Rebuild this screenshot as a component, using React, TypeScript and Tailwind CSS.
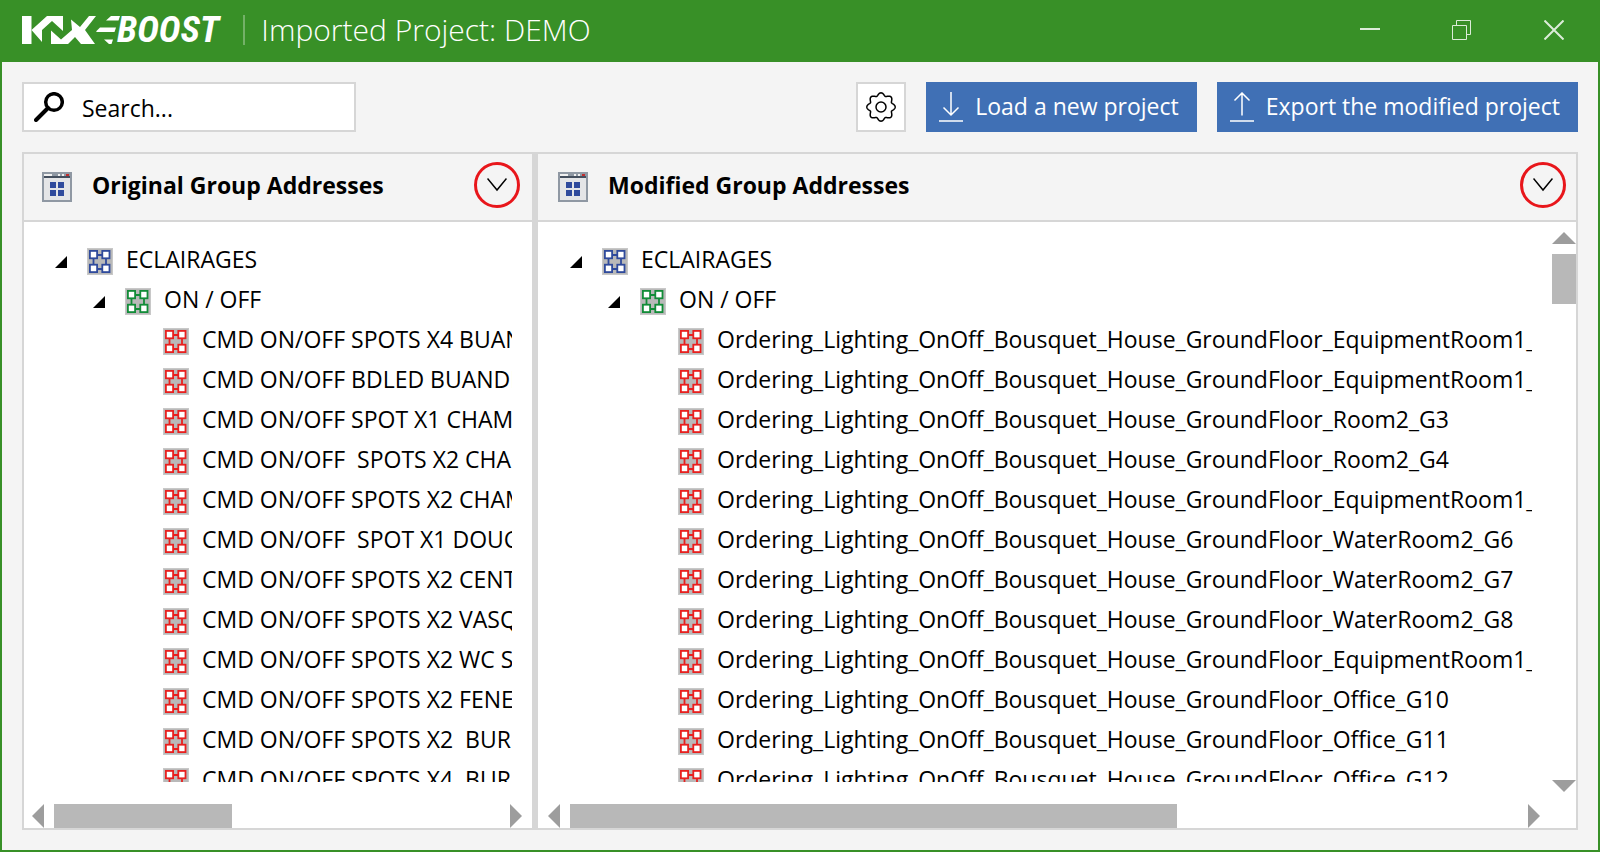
import React from "react";

const ui = "font-['Open_Sans','Noto_Sans',sans-serif]";

function Logo() {
  return (
    <div className="flex items-center text-white" role="img" aria-label="KNX eBoost">
      <svg width="95" height="28" viewBox="0 0 95 28" fill="currentColor" className="overflow-visible" aria-hidden="true">
        <path d="M0 0H9.500V28H0Z" />
        <path d="M9.500 14L25 0H41V15L30 5L20 14L20 26Z" />
        <path d="M29 14.500L39 23.500L50 14L49 3.500L58 11L67 0H74L63 14L73 28H59L53 21L46 28H29Z" />
        <path d="M84 4.500L89 0H98L96.500 4.500ZM74 15.500L78 11.500H94L92.500 16H75ZM82 23.500H91L89.500 28H87Z" />
      </svg>
      <span className="font-['Roboto_Condensed','Roboto',sans-serif] text-[37px] leading-8 font-bold italic">
        BOOST
      </span>
    </div>
  );
}

function AddressIcon({ className }: { className: string }) {
  return (
    <svg width="26" height="27" viewBox="0 0 26 27" className={`shrink-0 ${className}`} aria-hidden="true">
      <rect width="26" height="27" fill="#c8c8c8" />
      <rect x="1" y="1" width="24" height="25" fill="#b9b9b9" />
      <path d="M10 7H16M10 21H16M6.500 10V18M19 10V18" stroke="currentColor" strokeWidth="1.800" />
      <g fill="#fff" stroke="currentColor" strokeWidth="1.800">
        <rect x="2.900" y="2.900" width="7.200" height="7.400" />
        <rect x="15.300" y="2.900" width="7.200" height="7.400" />
        <rect x="2.900" y="16.700" width="7.200" height="7.400" />
        <rect x="15.300" y="16.700" width="7.200" height="7.400" />
      </g>
    </svg>
  );
}

function WindowIcon() {
  return (
    <svg width="30" height="30" viewBox="0 0 30 30" className="shrink-0" aria-hidden="true">
      <rect width="30" height="30" fill="#8f98a3" />
      <rect x="2" y="4" width="26" height="24" fill="#e4e5e7" />
      <path d="M2 2H10V4H2ZM16 2H18V4H16ZM20 2H22V4H20Z" fill="#f1f1f1" />
      <path d="M24 2H27V4H24Z" fill="#c22d2d" />
      <path d="M2 4H28V6H2Z" fill="#444f5e" />
      <path d="M8 10H14V16H8ZM16 10H22V16H16ZM8 18H14V24H8ZM16 18H22V24H16Z" fill="#2f4a9c" />
    </svg>
  );
}

const gearPath =
  Array.from({ length: 128 }, (_, i) => {
    const a = (i / 128) * Math.PI * 2;
    const r = 11.300 + 2.900 * Math.pow((1 + Math.cos(8 * a)) / 2, 0.800);
    return `${i ? "L" : "M"}${(15 + r * Math.sin(a)).toFixed(2)} ${(15 - r * Math.cos(a)).toFixed(2)}`;
  }).join("") + "Z";

function Gear() {
  return (
    <svg width="30" height="30" viewBox="0 0 30 30" fill="none" stroke="#000" strokeWidth="1.500" strokeLinejoin="round" aria-hidden="true">
      <path d={gearPath} />
      <circle cx="15" cy="15" r="5" />
    </svg>
  );
}

function TransferIcon({ up }: { up?: boolean }) {
  return (
    <svg width="24" height="30" viewBox="0 0 24 30" fill="none" stroke="#fff" strokeWidth="1.500" aria-hidden="true">
      {up ? <path d="M12 23.500V1M4.500 8.500L12 1L19.500 8.500" /> : <path d="M12 0V23M4.500 15.500L12 23L19.500 15.500" />}
      <path d="M0 29H24" />
    </svg>
  );
}

type Dir = "up" | "down" | "left" | "right";

const arrows: Record<Dir, [number, number, string]> = {
  up: [24, 12, "M0 12L12 0L24 12Z"],
  down: [24, 12, "M0 0L12 12L24 0Z"],
  left: [12, 24, "M12 0L0 12L12 24Z"],
  right: [12, 24, "M0 0L12 12L0 24Z"],
};

function ScrollArrow({ dir }: { dir: Dir }) {
  const [w, h, d] = arrows[dir];
  return (
    <button type="button" aria-label={`Scroll ${dir}`} className="block shrink-0">
      <svg width={w} height={h} viewBox={`0 0 ${w} ${h}`} fill="#9d9d9d" className="block">
        <path d={d} />
      </svg>
    </button>
  );
}

function HScroll({ className, thumb }: { className: string; thumb: string }) {
  return (
    <div className={`flex h-6 shrink-0 items-center gap-2.5 ${className}`}>
      <ScrollArrow dir="left" />
      <div className="h-6 flex-1">
        <div className={`h-6 bg-[#b8b8b8] ${thumb}`} />
      </div>
      <ScrollArrow dir="right" />
    </div>
  );
}

function Row({ level, color, open, children }: { level: string; color: string; open?: boolean; children: string }) {
  return (
    <li className={`flex h-10 items-center whitespace-pre ${level}`}>
      <span className="w-8 shrink-0">
        {open && (
          <svg width="12" height="12" viewBox="0 0 12 12" className="mt-0.5 block" aria-hidden="true">
            <path d="M12 0V12H0Z" />
          </svg>
        )}
      </span>
      <AddressIcon className={color} />
      <span className="pb-1 pl-[13px]">{children}</span>
    </li>
  );
}

function Panel({ title, items, vertical }: { title: string; items: string[]; vertical?: boolean }) {
  return (
    <section className="flex min-h-0 min-w-0 flex-1 flex-col">
      <header className={`flex h-[68px] shrink-0 items-center border-b-2 border-[#d6d6d6] bg-[#f4f4f4] ${vertical ? "pr-2.5 pl-5" : "pr-3 pl-[18px]"}`}>
        <WindowIcon />
        <h2 className="flex-1 pb-1 pl-5 text-[23px] font-bold">{title}</h2>
        <button type="button" aria-label={`Expand ${title}`} className="mb-1 flex size-[46px] items-center justify-center rounded-full border-[3px] border-[#e8161b]">
          <svg width="20" height="14" viewBox="0 0 20 14" fill="none" stroke="#000" strokeWidth="1.500" aria-hidden="true">
            <path d="M0.500 0.500L10 12L19.500 0.500" />
          </svg>
        </button>
      </header>
      <div className="flex min-h-0 flex-1 bg-white">
        <div className="flex min-w-0 flex-1 flex-col">
          <div className={`flex min-h-0 flex-1 flex-col pt-[19px] pr-5 pb-[22px] ${vertical ? "pl-[21px]" : "pl-5"}`}>
            <ul className="min-h-0 flex-1 overflow-hidden">
              <Row level="pl-[11px]" color="text-[#2f4a9c]" open>ECLAIRAGES</Row>
              <Row level="pl-[49px]" color="text-[#128c38]" open>ON / OFF</Row>
              {items.map((t) => (
                <Row key={t} level="pl-[87px]" color="text-[#e8201f]">{t}</Row>
              ))}
            </ul>
          </div>
          <HScroll className={vertical ? "pr-3 pl-2.5" : "pr-2.5 pl-2"} thumb={vertical ? "w-[64%]" : "w-[40%]"} />
        </div>
        {vertical && (
          <div className="flex w-6 shrink-0 flex-col gap-2.5 pt-2.5 pb-9">
            <ScrollArrow dir="up" />
            <div className="flex-1">
              <div className="h-[50px] bg-[#b8b8b8]" />
            </div>
            <ScrollArrow dir="down" />
          </div>
        )}
      </div>
    </section>
  );
}

const original = [
  "CMD ON/OFF SPOTS X4 BUANDERIE",
  "CMD ON/OFF BDLED BUANDERIE",
  "CMD ON/OFF SPOT X1 CHAMBRE",
  "CMD ON/OFF  SPOTS X2 CHAMBRE",
  "CMD ON/OFF SPOTS X2 CHAMBRE",
  "CMD ON/OFF  SPOT X1 DOUCHE",
  "CMD ON/OFF SPOTS X2 CENTRE",
  "CMD ON/OFF SPOTS X2 VASQUE",
  "CMD ON/OFF SPOTS X2 WC SDB",
  "CMD ON/OFF SPOTS X2 FENETRE",
  "CMD ON/OFF SPOTS X2  BUREAU",
  "CMD ON/OFF SPOTS X4  BUREAU",
];

const prefix = "Ordering_Lighting_OnOff_Bousquet_House_GroundFloor_";
const modified = [
  "EquipmentRoom1_N1",
  "EquipmentRoom1_N2",
  "Room2_G3",
  "Room2_G4",
  "EquipmentRoom1_N5",
  "WaterRoom2_G6",
  "WaterRoom2_G7",
  "WaterRoom2_G8",
  "EquipmentRoom1_N9",
  "Office_G10",
  "Office_G11",
  "Office_G12",
].map((s) => prefix + s);

export default function App() {
  return (
    <div className={`flex h-screen flex-col border-2 border-t-0 border-[#389027] bg-[#f4f4f4] text-[23px] leading-8 text-black ${ui}`}>
      <header className="flex h-[62px] shrink-0 items-center bg-[#389027] pb-0.5 pl-5">
        <Logo />
        <div className="ml-6 h-[30px] w-0.5 bg-[#74b168]" />
        <h1 className="flex-1 pl-4 text-[30px] leading-10 font-light text-white">Imported Project: DEMO</h1>
        <div className="-mr-0.5 flex text-[#dcecd9]">
          <button type="button" aria-label="Minimize" className="flex h-[60px] w-[92px] items-center justify-center">
            <svg width="20" height="20" viewBox="0 0 20 20" stroke="currentColor" strokeWidth="2" aria-hidden="true">
              <path d="M0 9H20" />
            </svg>
          </button>
          <button type="button" aria-label="Restore" className="flex h-[60px] w-[92px] items-center justify-center">
            <svg width="20" height="20" viewBox="0 0 20 20" fill="none" stroke="currentColor" aria-hidden="true">
              <path d="M0.500 5.500H14.500V19.500H0.500ZM4.500 5V0.500H18.500V14.500H15" />
            </svg>
          </button>
          <button type="button" aria-label="Close" className="flex h-[60px] w-[92px] items-center justify-center">
            <svg width="20" height="20" viewBox="0 0 20 20" stroke="currentColor" strokeWidth="2" aria-hidden="true">
              <path d="M0.500 0.500L19.500 19.500M19.500 0.500L0.500 19.500" />
            </svg>
          </button>
        </div>
      </header>
      <main className="flex min-h-0 flex-1 flex-col gap-5 p-5">
        <div className="flex h-[50px] shrink-0 items-center gap-5">
          <label className="flex h-[50px] w-[334px] items-center border-2 border-[#d6d6d6] bg-white pl-2.5">
            <svg width="30" height="30" viewBox="0 0 30 30" fill="none" stroke="#000" aria-hidden="true">
              <circle cx="20" cy="10" r="8.300" strokeWidth="3.500" />
              <path d="M14 16L2 28" strokeWidth="4" strokeLinecap="round" />
            </svg>
            <input type="text" aria-label="Search" placeholder="Search..." className="min-w-0 flex-1 pt-0.5 pl-[18px] outline-none placeholder:text-black" />
          </label>
          <div className="flex-1" />
          <button type="button" aria-label="Settings" className="flex size-[50px] items-center justify-center border-2 border-[#d6d6d6] bg-white">
            <Gear />
          </button>
          <button type="button" className="flex h-[50px] items-center bg-[#4070b5] pr-[18px] pl-[13px] text-white">
            <TransferIcon />
            <span className="pb-0.5 pl-3">Load a new project</span>
          </button>
          <button type="button" className="flex h-[50px] items-center bg-[#4070b5] pr-[18px] pl-[13px] text-white">
            <TransferIcon up />
            <span className="pb-0.5 pl-3">Export the modified project</span>
          </button>
        </div>
        <div className="flex min-h-0 flex-1 border-2 border-[#d6d6d6]">
          <div className="flex min-w-0 flex-[508_1_0%]">
            <Panel title="Original Group Addresses" items={original} />
          </div>
          <div className="w-1.5 shrink-0 cursor-col-resize bg-[#d6d6d6]" />
          <div className="flex min-w-0 flex-[1038_1_0%]">
            <Panel title="Modified Group Addresses" items={modified} vertical />
          </div>
        </div>
      </main>
    </div>
  );
}
